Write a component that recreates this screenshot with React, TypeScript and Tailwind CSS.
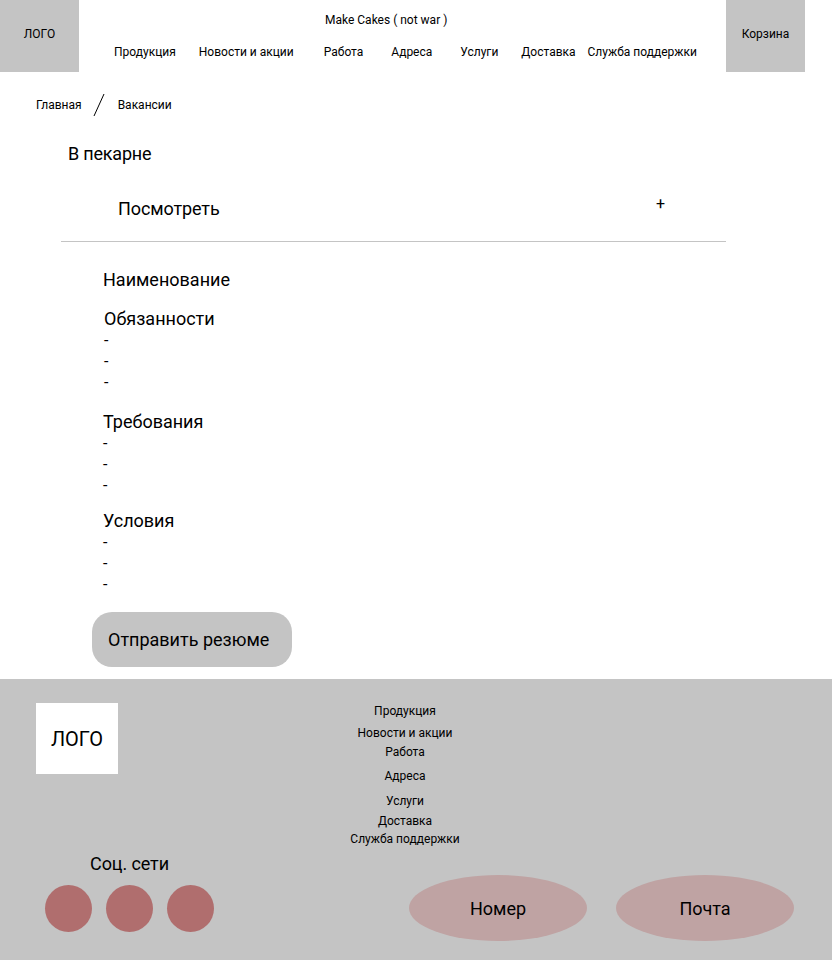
const NAV = [
  { label: 'Продукция', ml: 'ml-[35px]' },
  { label: 'Новости и акции', ml: 'ml-[23px]' },
  { label: 'Работа', ml: 'ml-[30px]' },
  { label: 'Адреса', ml: 'ml-[28px]' },
  { label: 'Услуги', ml: 'ml-[28px]' },
  { label: 'Доставка', ml: 'ml-[23px]' },
  { label: 'Служба поддержки', ml: 'ml-[12px]' },
]

const SECTIONS = [
  { title: 'Обязанности', cls: 'ml-0' },
  { title: 'Требования', cls: '-ml-px mt-[18px]' },
  { title: 'Условия', cls: '-ml-px mt-[14px]' },
]

function Dashes() {
  return (
    <div className="flex flex-col">
      {[0, 1, 2].map((i) => (
        <span key={i} className="h-[21px] leading-[21px] text-[16px]">-</span>
      ))}
    </div>
  )
}

export default function App() {
  return (
    <div className="w-[832px] h-[960px] bg-white text-black font-['Roboto',sans-serif] flex flex-col">
      {/* шапка */}
      <header className="h-[72px] flex shrink-0">
        <div className="w-[79px] bg-[#c4c4c4] flex items-center justify-center pb-[5px] text-[12px]">ЛОГО</div>
        <div className="flex-1 flex flex-col">
          <div className="ml-[246px] mt-[12px] h-[16px] leading-[16px] text-[12px]">Make Cakes ( not war )</div>
          <nav className="flex mt-[16px] h-[16px] leading-[16px] text-[12px]">
            {NAV.map((n) => (
              <span key={n.label} className={n.ml}>{n.label}</span>
            ))}
          </nav>
        </div>
        <div className="w-[79px] mr-[27px] bg-[#c4c4c4] flex items-center justify-center pb-[5px] text-[12px]">Корзина</div>
      </header>

      {/* крошки */}
      <div className="flex items-center h-[22px] mt-[22px] pl-[36px] text-[12px]">
        <span>Главная</span>
        <svg width="12" height="24" viewBox="0 0 12 24" className="ml-[11px] mr-[13px]">
          <line x1="1" y1="23" x2="11" y2="1" stroke="black" strokeWidth="1" />
        </svg>
        <span>Вакансии</span>
      </div>

      <main className="flex-1 flex flex-col">
        <div className="ml-[68px] mt-[27px] h-[22px] leading-[22px] text-[18px] tracking-[-0.2px]">В пекарне</div>
        <div className="ml-[61px] w-[665px] border-b border-[#c4c4c4] flex items-start h-[77px]">
          <span className="ml-[57px] mt-[32px] h-[24px] leading-[24px] text-[18px] tracking-[-0.1px]">Посмотреть</span>
          <span className="ml-auto mr-[61px] mt-[27px] text-[16px] leading-[24px]">+</span>
        </div>

        <div className="ml-[103px] mt-[26px] h-[24px] leading-[24px] text-[18px]">Наименование</div>
        <div className="ml-[104px] mt-[16px] flex flex-col">
          {SECTIONS.map((s) => (
            <div key={s.title} className={`flex flex-col ${s.cls}`}>
              <span className="h-[22px] leading-[22px] text-[18px]">{s.title}</span>
              <Dashes />
            </div>
          ))}
        </div>

        <button
          type="button"
          className="ml-[92px] mt-[17px] w-[200px] h-[55px] rounded-[20px] bg-[#c4c4c4] text-[18px] text-left pl-[16px]"
        >
          Отправить резюме
        </button>
      </main>

      {/* подвал */}
      <footer className="h-[281px] bg-[#c4c4c4] shrink-0 flex flex-col">
        <div className="flex">
          <div className="ml-[36px] mt-[24px] w-[82px] h-[71px] bg-white flex items-center justify-center text-[20px]">ЛОГО</div>
          <div className="ml-[227px] mt-[24px] w-[120px] flex flex-col items-center text-[12px] leading-[16px] whitespace-nowrap">
            <span>Продукция</span>
            <span className="mt-[6px]">Новости и акции</span>
            <span className="mt-[3px]">Работа</span>
            <span className="mt-[8px]">Адреса</span>
            <span className="mt-[9px]">Услуги</span>
            <span className="mt-[4px]">Доставка</span>
            <span className="mt-[2px]">Служба поддержки</span>
          </div>
        </div>
        <div className="flex mt-[6px]">
          <div className="flex flex-col items-center ml-[45px] w-[169px]">
            <span className="text-[18px] leading-[22px] tracking-[-0.1px]">Соц. сети</span>
            <div className="flex gap-[14px] mt-[10px]">
              {[0, 1, 2].map((i) => (
                <span key={i} className="w-[47px] h-[47px] rounded-full bg-[#b06e6e]" />
              ))}
            </div>
          </div>
          <div className="ml-[195px] mt-[22px] w-[178px] h-[66px] rounded-[50%] bg-[#bfa3a3] flex items-center justify-center text-[18px]">Номер</div>
          <div className="ml-[29px] mt-[22px] w-[178px] h-[66px] rounded-[50%] bg-[#bfa3a3] flex items-center justify-center text-[18px]">Почта</div>
        </div>
      </footer>
    </div>
  )
}
